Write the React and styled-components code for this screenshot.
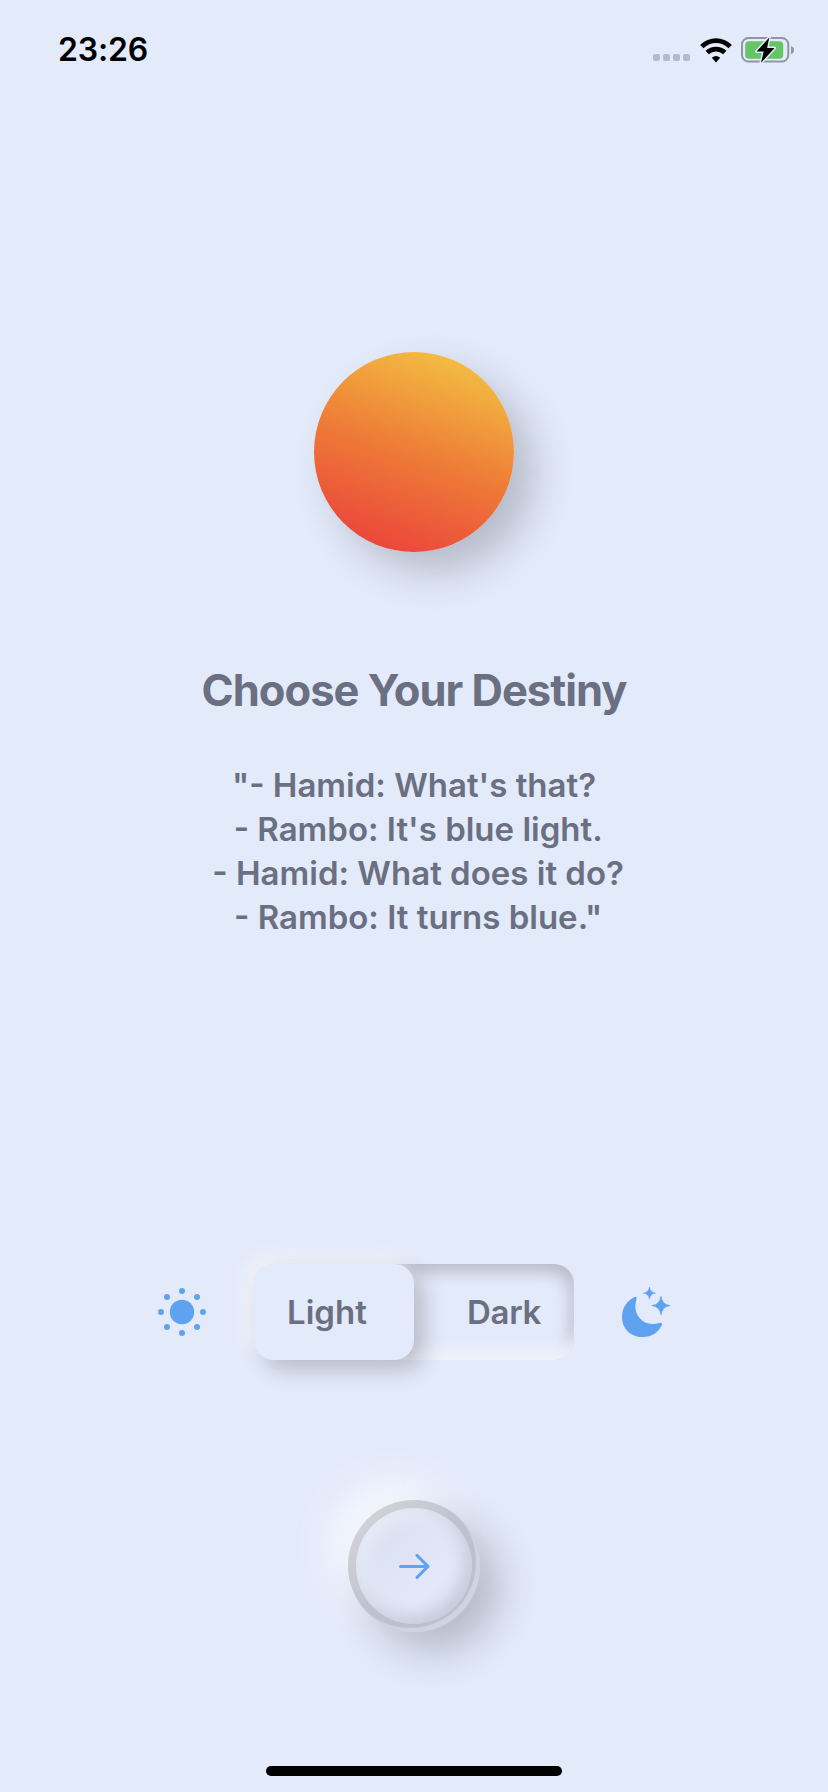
import React from 'react';
import styled, { createGlobalStyle } from 'styled-components';

const colors = {
  surface: '#e3eafa',
  text: '#6a6f82',
  accent: '#5fa3f0',
};

const GlobalStyle = createGlobalStyle`
  * { box-sizing: border-box; }
  body { margin: 0; background: ${colors.surface}; }
  svg { display: block; }
`;

const Screen = styled.main`
  display: flex;
  flex-direction: column;
  align-items: center;
  width: 828px;
  height: 1792px;
  overflow: hidden;
  background: ${colors.surface};
  color: ${colors.text};
  font-family: Inter, sans-serif;
`;

const StatusBar = styled.header`
  display: flex;
  align-items: center;
  justify-content: space-between;
  align-self: stretch;
  height: 100px;
  padding: 0 33px 0 58px;
`;

const Clock = styled.time`
  color: #000;
  font-size: 32px;
  font-weight: 600;
  line-height: 40px;
  letter-spacing: -0.2px;
`;

const StatusIcons = styled.div`
  display: flex;
  align-items: center;
  gap: 9px;
`;

const SignalDots = styled.div`
  display: flex;
  gap: 3px;
  padding: 15px 1px 0 0;
`;

const SignalDot = styled.i`
  width: 7px;
  height: 7px;
  border-radius: 2px;
  background: #b5bacb;
`;

const Sun = styled.div`
  width: 200px;
  height: 200px;
  margin-top: 252px;
  border-radius: 50%;
  background: linear-gradient(20deg, #eb463b 10%, #ee7d37 50%, #f3bd42 90%);
  box-shadow: 20px 20px 40px rgba(0, 0, 0, 0.2);
`;

const Title = styled.h1`
  margin: 111px 0 0;
  font-size: 43.5px;
  font-weight: 700;
  line-height: 54px;
  letter-spacing: -1px;
`;

const Quote = styled.p`
  margin: 46px 0 0;
  font-size: 33px;
  font-weight: 600;
  line-height: 44px;
  letter-spacing: 0;
  text-align: center;
  white-space: pre;
`;

const ThemeRow = styled.section`
  display: flex;
  align-items: center;
  gap: 48px;
  margin-top: 325px;
`;

const Track = styled.div`
  display: flex;
  width: 320px;
  height: 96px;
  border-radius: 20px;
  box-shadow:
    inset 0 -18px 14px -6px rgba(237, 241, 252, 0.95),
    inset -4px 8px 16px rgba(0, 0, 0, 0.2);
`;

const Segment = styled.button`
  flex: 1;
  padding: 0 33px;
  border: 0;
  border-radius: 20px;
  background: ${({ $active }) => ($active ? colors.surface : 'transparent')};
  box-shadow: ${({ $active }) =>
    $active
      ? '10px 10px 22px rgba(0,0,0,0.2), -8px -8px 18px rgba(242,243,247,0.9)'
      : 'none'};
  color: inherit;
  font: 600 33px/44px Inter, sans-serif;
  letter-spacing: ${({ $active }) => ($active ? '0' : '-0.3px')};
  text-align: ${({ $active }) => ($active ? 'left' : 'right')};
`;

const NextButton = styled.button`
  display: flex;
  width: 132px;
  height: 132px;
  margin-top: 140px;
  padding: 8px;
  border: 0;
  border-radius: 50%;
  background: linear-gradient(135deg, #d2d3d8 12%, #bec2ce 50%, #bbbfcb 90%);
  box-shadow:
    20px 20px 40px rgba(0, 0, 0, 0.2),
    -20px -20px 40px rgba(250, 251, 255, 0.8),
    inset -4px -4px 1px #d0d4e2;
`;

const ButtonFace = styled.span`
  display: flex;
  align-items: center;
  justify-content: center;
  width: 116px;
  height: 116px;
  border-radius: 50%;
  background: linear-gradient(135deg, #d9e0f0 20%, #e3e9fb 68%);
  box-shadow:
    inset -7px -7px 18px rgba(0, 0, 0, 0.14),
    inset 7px 7px 18px rgba(238, 241, 251, 0.85);
`;

const HomeIndicator = styled.div`
  width: 296px;
  height: 10px;
  margin-top: 134px;
  border-radius: 5px;
  background: #000;
`;

const WifiIcon = () => (
  <svg width="32" height="25" viewBox="0 0 32 25">
    <g fill="none" stroke="#000" strokeWidth="4.8">
      <path d="M1.8 8.6Q8 2.6 16 2.6T30.2 8.6" />
      <path d="M7.2 14.6Q11 11.1 16 11.1T24.8 14.6" />
    </g>
    <path d="M11.8 19.7Q16 16.2 20.2 19.7L16 24.4Z" />
  </svg>
);

const BatteryIcon = () => (
  <svg width="54" height="28" viewBox="0 0 54 28">
    <rect x="1" y="2" width="46.3" height="23.5" rx="6.5" fill="none" stroke="#8f95a5" strokeWidth="2" />
    <rect x="4.2" y="5.2" width="38" height="17.5" rx="4" fill="#64c466" />
    <path d="M50 10v8q3-1 3-4t-3-4Z" fill="#8f95a5" />
    <path
      d="M28.3 1.4 15.6 15.6h7.1L20 26.8l13.6-14.8h-7.5Z"
      stroke={colors.surface}
      strokeWidth="3"
      strokeLinejoin="round"
      paintOrder="stroke"
    />
  </svg>
);

const rays = [
  [24, 3], [39, 9], [45, 24], [39, 39],
  [24, 45], [9, 39], [3, 24], [9, 9],
];

const SunIcon = () => (
  <svg width="48" height="48" viewBox="0 0 48 48" fill={colors.accent}>
    <circle cx="24" cy="24" r="12.2" />
    {rays.map(([x, y]) => (
      <circle key={`${x}-${y}`} cx={x} cy={y} r="3" />
    ))}
  </svg>
);

const MoonIcon = () => (
  <svg width="48" height="52" viewBox="2 0 48 52" fill={colors.accent}>
    <path d="M14.2 11.2C16 10.2 17 11.1 16.5 13C14.7 20 14.9 26.2 19.2 31.5C24.5 38 31.5 39.1 39.6 36.9C41.6 36.4 42.5 37.5 41.7 39.2C38.2 46.6 31.5 51 22.7 51C10.6 51 2 42.5 2 31.2C2 22 6.6 14.9 14.2 11.2Z" />
    <path d="M29.4 1Q30.1 6.4 35.5 7.1Q30.1 7.8 29.4 13.2Q28.7 7.8 23.3 7.1Q28.7 6.4 29.4 1Z" stroke={colors.accent} strokeWidth=".5" />
    <path d="M41 10.4Q42.1 18.5 50 19.6Q42.1 20.7 41 28.8Q39.9 20.7 31.8 19.6Q39.9 18.5 41 10.4Z" stroke={colors.accent} strokeWidth=".7" />
  </svg>
);

const ArrowIcon = () => (
  <svg width="32" height="28" viewBox="0 0 32 28" fill="none" stroke={colors.accent} strokeWidth="3" strokeLinecap="round" strokeLinejoin="round">
    <path d="M2.5 14.4H30M19 3.4 30 14.4 19 25.4" />
  </svg>
);

const quote = [
  '"- Hamid: What\'s that?',
  " - Rambo: It's blue light.",
  ' - Hamid: What does it do?',
  ' - Rambo: It turns blue."',
].join('\n');

export default function App() {
  return (
    <Screen>
      <GlobalStyle />
      <StatusBar>
        <Clock>23:26</Clock>
        <StatusIcons>
          <SignalDots>
            {[0, 1, 2, 3].map((dot) => (
              <SignalDot key={dot} />
            ))}
          </SignalDots>
          <WifiIcon />
          <BatteryIcon />
        </StatusIcons>
      </StatusBar>
      <Sun />
      <Title>Choose Your Destiny</Title>
      <Quote>{quote}</Quote>
      <ThemeRow>
        <SunIcon />
        <Track>
          <Segment $active>Light</Segment>
          <Segment>Dark</Segment>
        </Track>
        <MoonIcon />
      </ThemeRow>
      <NextButton aria-label="Next">
        <ButtonFace>
          <ArrowIcon />
        </ButtonFace>
      </NextButton>
      <HomeIndicator />
    </Screen>
  );
}
